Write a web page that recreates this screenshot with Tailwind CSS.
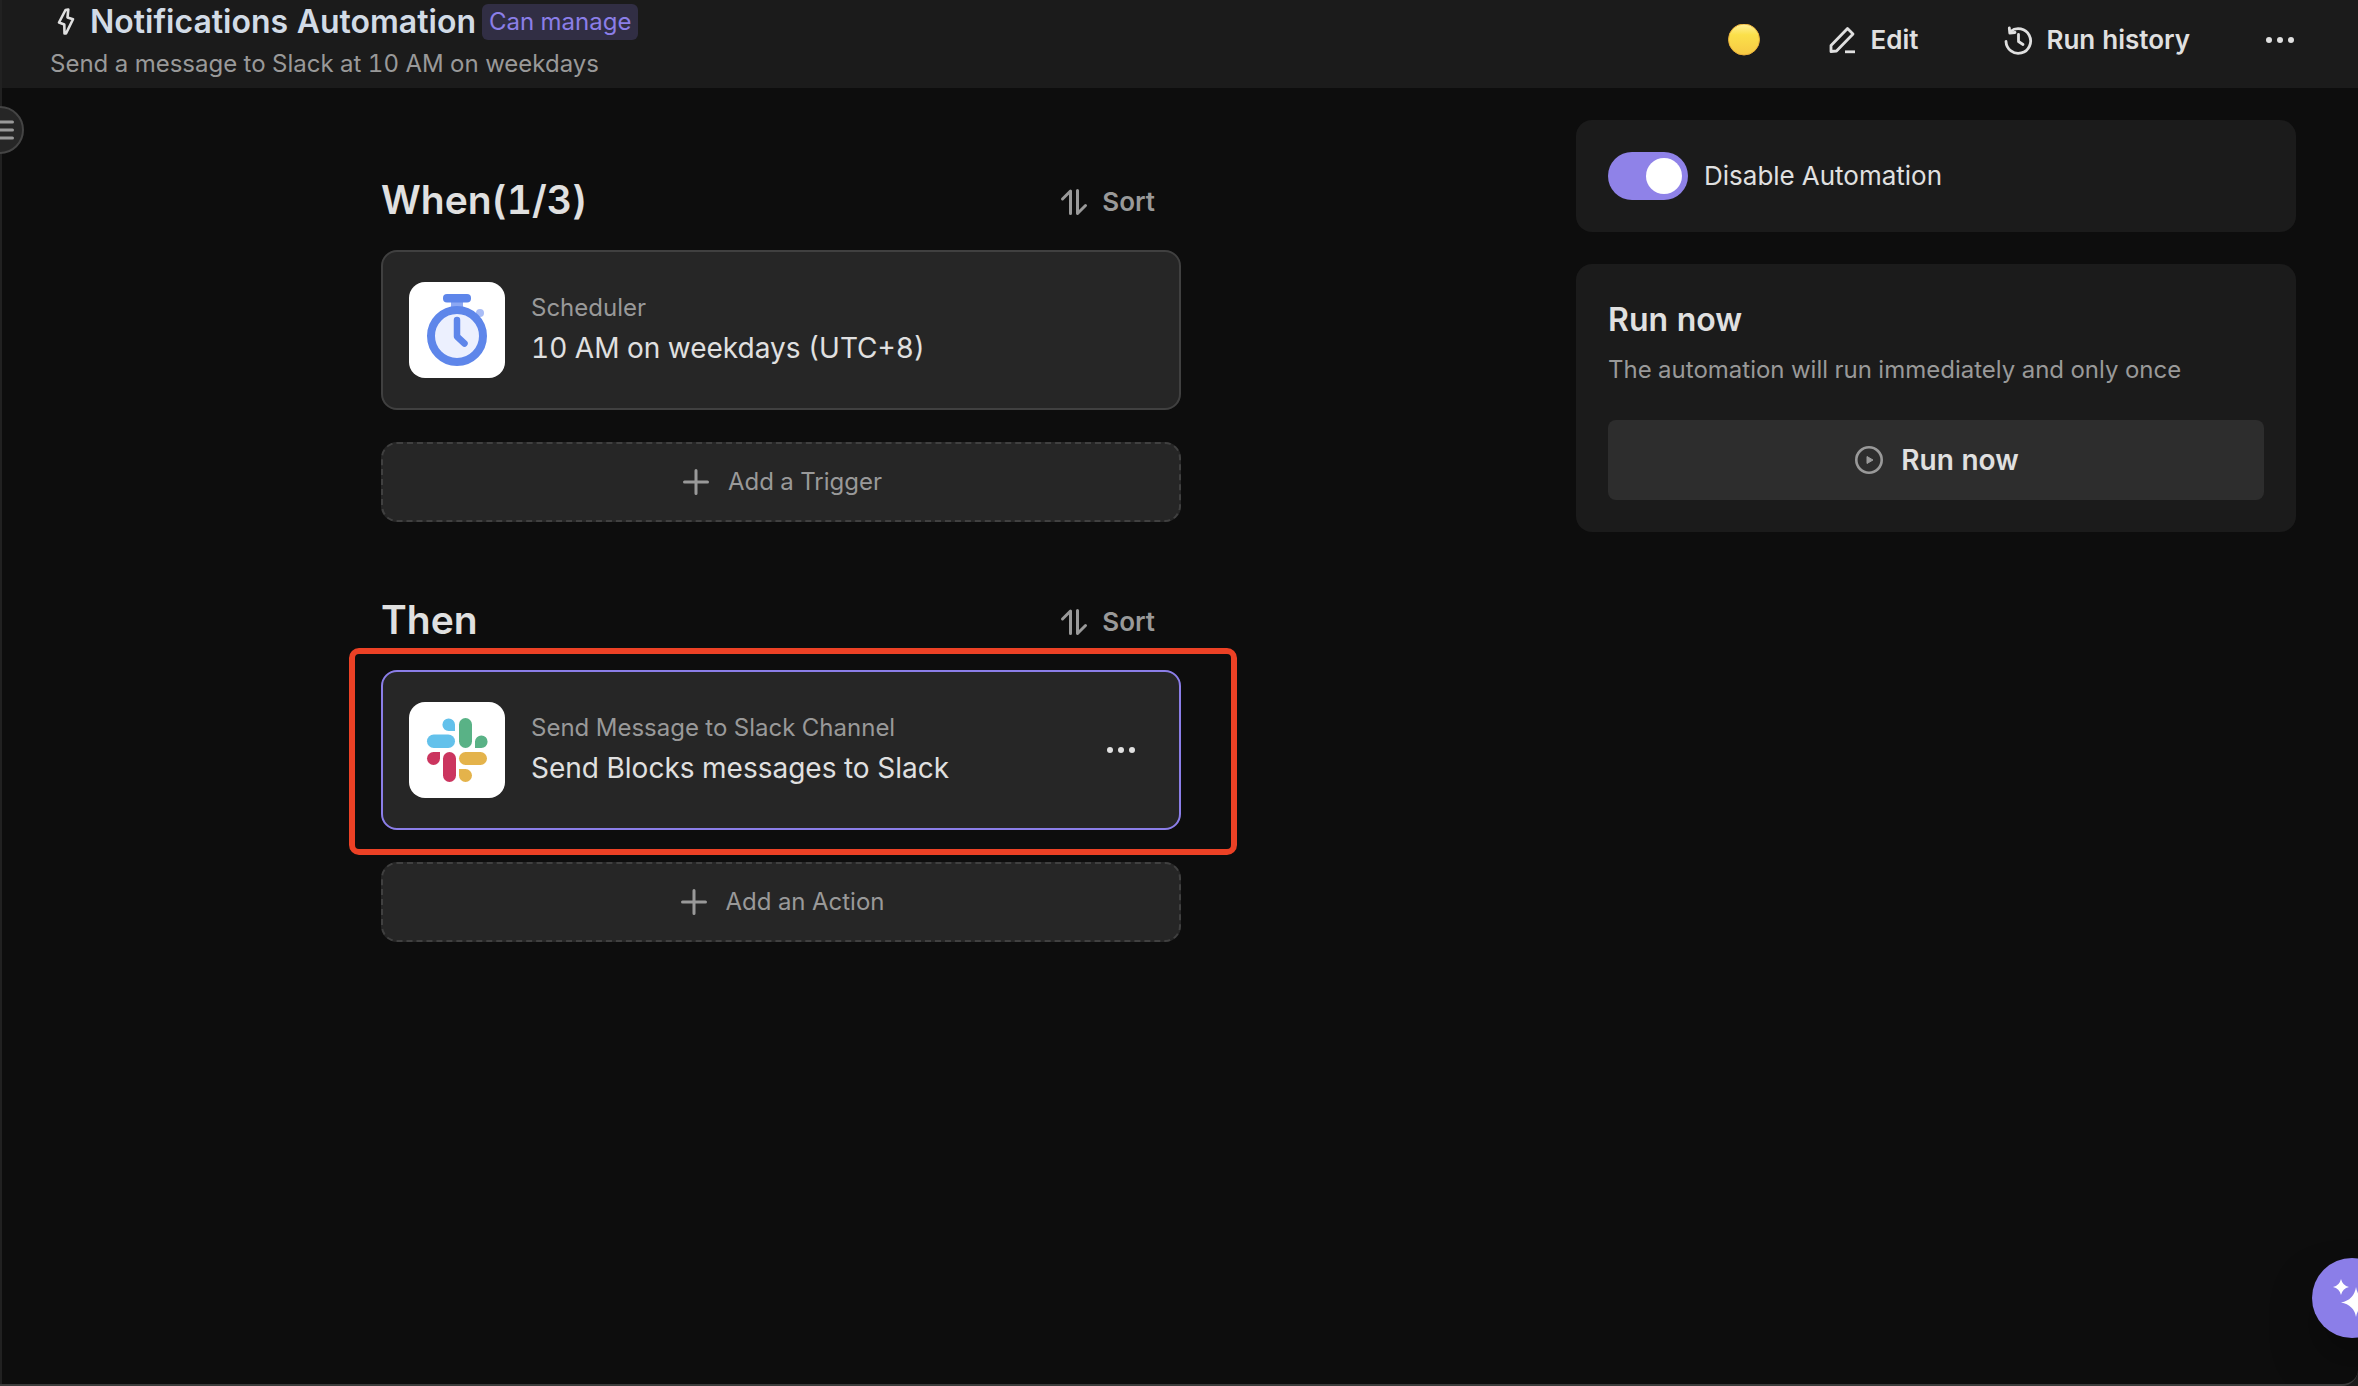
<!DOCTYPE html>
<html lang="en">
<head>
<meta charset="utf-8">
<meta name="viewport" content="width=device-width, initial-scale=1">
<title>Notifications Automation</title>
<script src="https://cdn.jsdelivr.net/npm/@tailwindcss/browser@4"></script>
</head>
<body class="bg-[#1b1b1b] font-['Inter',sans-serif] text-[#e0e0e0] tabular-nums">
<div class="relative flex min-h-screen flex-col overflow-hidden rounded-br-2xl border-b-2 border-[#3c3c3c] bg-[#0d0d0d]">

  <header class="flex h-[88px] items-start justify-between border-l-2 border-[#212121] bg-[#1b1b1b] pr-[62px] pl-12">
    <div class="flex flex-col gap-1">
      <div class="flex h-11 items-center">
        <svg class="mr-2 size-8" viewBox="0 0 32 32" fill="none" stroke="#e0e0e0" stroke-width="2.6" stroke-linejoin="round" aria-hidden="true"><path d="M15.500 4 18.300 3.500 17.500 11.500 23 13.300 16 27.500 14.500 27.500 14.300 18.500 9 16.500Z"/></svg>
        <h1 class="text-[32px] leading-10 font-semibold text-[#d2dbe6]">Notifications Automation</h1>
        <span class="ml-1.5 flex h-9 items-center rounded-md bg-[#312e44] px-[7px] text-2xl text-[#8b7ee8]">Can manage</span>
      </div>
      <p class="text-2xl leading-8 text-[#999999]">Send a message to Slack at 10 AM on weekdays</p>
    </div>
    <div class="flex h-20 items-center text-[26px] leading-8 font-semibold">
      <svg class="mr-[66px] size-8" viewBox="0 0 32 32" aria-hidden="true">
        <defs><linearGradient id="coin" x1="0" y1="0" x2="0" y2="1"><stop offset="0" stop-color="#fff09a"/><stop offset=".35" stop-color="#fbe04a"/><stop offset="1" stop-color="#f6c944"/></linearGradient></defs>
        <circle cx="16" cy="15.500" r="15.500" fill="url(#coin)" stroke="#e9b03a" stroke-width="1"/>
      </svg>
      <button class="mr-[84px] flex items-center gap-3">
        <svg class="size-8" viewBox="0 0 32 32" fill="none" stroke="#e0e0e0" stroke-width="2.800" stroke-linejoin="round" aria-hidden="true"><path d="M5 27.500V21.500L21.500 4.500 27 10 10.500 27Z"/><path d="M19 27.800h10"/></svg>
        Edit
      </button>
      <button class="mr-[74px] flex items-center gap-3">
        <svg class="size-8" viewBox="0 0 32 32" fill="none" stroke="#e0e0e0" stroke-width="2.800" stroke-linecap="round" stroke-linejoin="round" aria-hidden="true"><path d="M4 17.500A12.300 12.300 0 1 0 8.500 7.500"/><path d="M7.300 4 7.800 9 13 8.500"/><path d="M16.500 10.500V17.500L21 20.500"/></svg>
        Run history
      </button>
      <button class="flex items-center" aria-label="More options">
        <svg class="size-8" viewBox="0 0 32 32" fill="#e0e0e0" aria-hidden="true"><circle cx="5" cy="16" r="3"/><circle cx="16" cy="16" r="3"/><circle cx="27" cy="16" r="3"/></svg>
      </button>
    </div>
  </header>

  <div class="flex flex-1 items-start border-l-2 border-[#212121]">
    <main class="flex flex-1 justify-center pt-[88px]">
      <div class="flex w-full max-w-[800px] flex-col">

        <section>
          <div class="mb-[26px] flex h-12 items-end justify-between">
            <h2 class="text-[39px] leading-[48px] font-semibold">When(1/3)</h2>
            <button class="flex h-11 items-center gap-3 pr-[26px] text-[26px] leading-8 font-semibold text-[#999999]">
              <svg class="size-8" viewBox="0 0 32 32" fill="none" stroke="#999999" stroke-width="3" stroke-linecap="round" stroke-linejoin="round" aria-hidden="true"><path d="M4.500 13 12.500 5V27.500"/><path d="M27.500 19.500 19.500 27.500V4.500"/></svg>
              Sort
            </button>
          </div>
          <div class="flex h-40 items-center rounded-2xl border-2 border-[#404040] bg-[#262626] px-[26px]">
            <svg class="size-24 rounded-2xl bg-white" viewBox="0 0 96 96" fill="none" aria-hidden="true">
              <path d="M42 18h12v9H42z" fill="#8ca8f3"/>
              <circle cx="71" cy="31" r="4" fill="#a9bdf6"/>
              <rect x="34" y="12" width="28" height="8.500" rx="4" fill="#5e86ea"/>
              <circle cx="48" cy="54" r="26" fill="#ecf0fe" stroke="#5e86ea" stroke-width="8"/>
              <path d="M48 38V54.500L55.500 61.500" stroke="#5e86ea" stroke-width="6.500" stroke-linecap="round" stroke-linejoin="round"/>
            </svg>
            <div class="ml-[26px] flex flex-1 flex-col gap-1">
              <p class="text-2xl leading-8 text-[#999999]">Scheduler</p>
              <h3 class="text-[28px] leading-10">10 AM on weekdays (UTC+8)</h3>
            </div>
          </div>
          <button class="mt-8 flex h-20 w-full items-center justify-center gap-4 rounded-2xl border-2 border-dashed border-[#404040] bg-[#262626] text-2xl leading-8 text-[#999999]">
            <svg class="size-8" viewBox="0 0 32 32" fill="none" stroke="#999999" stroke-width="3" stroke-linecap="round" aria-hidden="true"><path d="M16 4.500v23M4.500 16h23"/></svg>
            Add a Trigger
          </button>
        </section>

        <section class="mt-[74px]">
          <div class="mb-[26px] flex h-12 items-end justify-between">
            <h2 class="text-[39px] leading-[48px] font-semibold">Then</h2>
            <button class="flex h-11 items-center gap-3 pr-[26px] text-[26px] leading-8 font-semibold text-[#999999]">
              <svg class="size-8" viewBox="0 0 32 32" fill="none" stroke="#999999" stroke-width="3" stroke-linecap="round" stroke-linejoin="round" aria-hidden="true"><path d="M4.500 13 12.500 5V27.500"/><path d="M27.500 19.500 19.500 27.500V4.500"/></svg>
              Sort
            </button>
          </div>
          <div class="relative flex h-40 items-center rounded-2xl border-2 border-[#8b7ee8] bg-[#262626] px-[26px]">
            <svg class="size-24 rounded-2xl bg-white" viewBox="0 0 96 96" aria-hidden="true">
              <path d="M46 29V22.500A6.300 6.300 0 1 0 39.700 29Z" fill="#63c1eb"/>
              <rect x="18" y="32.500" width="28" height="13.500" rx="6.750" fill="#63c1eb"/>
              <rect x="50" y="16" width="13" height="30" rx="6.500" fill="#59b286"/>
              <path d="M66 46V39.500A6.300 6.300 0 1 1 72.300 46Z" fill="#59b286"/>
              <path d="M31 50V56.500A6.500 6.500 0 1 1 24.500 50Z" fill="#cb355f"/>
              <rect x="34" y="50" width="13" height="30" rx="6.500" fill="#cb355f"/>
              <rect x="50" y="50" width="28" height="13" rx="6.500" fill="#e4b34b"/>
              <path d="M50 67H56.500A6.500 6.500 0 1 1 50 73.500Z" fill="#e4b34b"/>
            </svg>
            <div class="ml-[26px] flex flex-1 flex-col gap-1">
              <p class="text-2xl leading-8 text-[#999999]">Send Message to Slack Channel</p>
              <h3 class="text-[28px] leading-10">Send Blocks messages to Slack</h3>
            </div>
            <button class="mr-4 flex items-center" aria-label="Action options">
              <svg class="size-8" viewBox="0 0 32 32" fill="#e0e0e0" aria-hidden="true"><circle cx="5" cy="16" r="3"/><circle cx="16" cy="16" r="3"/><circle cx="27" cy="16" r="3"/></svg>
            </button>
            <div class="pointer-events-none absolute -top-6 -right-[58px] -bottom-[27px] -left-[34px] rounded-[10px] border-6 border-[#ec4125]"></div>
          </div>
          <button class="mt-8 flex h-20 w-full items-center justify-center gap-4 rounded-2xl border-2 border-dashed border-[#404040] bg-[#262626] text-2xl leading-8 text-[#999999]">
            <svg class="size-8" viewBox="0 0 32 32" fill="none" stroke="#999999" stroke-width="3" stroke-linecap="round" aria-hidden="true"><path d="M16 4.500v23M4.500 16h23"/></svg>
            Add an Action
          </button>
        </section>
      </div>
    </main>

    <aside class="flex w-[798px] flex-col gap-8 pt-8 pr-[62px] pl-4">
      <div class="rounded-2xl bg-[#1b1b1b] p-8">
        <label class="flex h-12 items-center gap-4 text-[26px] leading-8">
          <input type="checkbox" role="switch" checked class="flex h-12 w-20 appearance-none items-center justify-start rounded-full bg-[#555555] px-1.5 before:size-9 before:rounded-full before:bg-white checked:justify-end checked:bg-[#8f82e8]">
          Disable Automation
        </label>
      </div>
      <section class="rounded-2xl bg-[#1b1b1b] p-8">
        <h2 class="text-[32px] leading-[48px] font-semibold">Run now</h2>
        <p class="mt-2 text-2xl leading-9 text-[#999999]">The automation will run immediately and only once</p>
        <button class="mt-8 flex h-20 w-full items-center justify-center gap-4 rounded-lg bg-[#2d2d2d] text-[28px] leading-10 font-semibold">
          <svg class="size-8" viewBox="0 0 32 32" fill="none" aria-hidden="true"><circle cx="16" cy="16" r="12.700" stroke="#999999" stroke-width="2.600"/><path d="M14 12.500V19.500L20 16Z" fill="#999999" stroke="#999999" stroke-linejoin="round"/></svg>
          Run now
        </button>
      </section>
    </aside>
  </div>

  <button class="absolute top-[106px] -left-6 flex size-12 items-center justify-end rounded-full border-2 border-[#444444] bg-[#262626]" aria-label="Open sidebar">
    <svg class="mr-1.5 size-8" viewBox="0 0 32 32" fill="none" stroke="#999999" stroke-width="3" stroke-linecap="round" aria-hidden="true"><path d="M3 8h25.500M3 16h25.500M3 24h25.500"/></svg>
  </button>

  <button class="absolute -right-[34px] bottom-[46px] flex size-20 items-center justify-center rounded-full bg-[#8b7ee8] shadow-2xl shadow-black/50" aria-label="Assistant">
    <svg class="size-10" viewBox="0 0 40 40" fill="#ffffff" aria-hidden="true"><path d="M9 1Q10.500 7.500 17 9 10.500 10.500 9 17 7.500 10.500 1 9 7.500 7.500 9 1Z"/><path d="M24 9Q26 22 39 24.500 26 27 24 39 22 27 9 24.500 22 22 24 9Z"/></svg>
  </button>
</div>
</body>
</html>
